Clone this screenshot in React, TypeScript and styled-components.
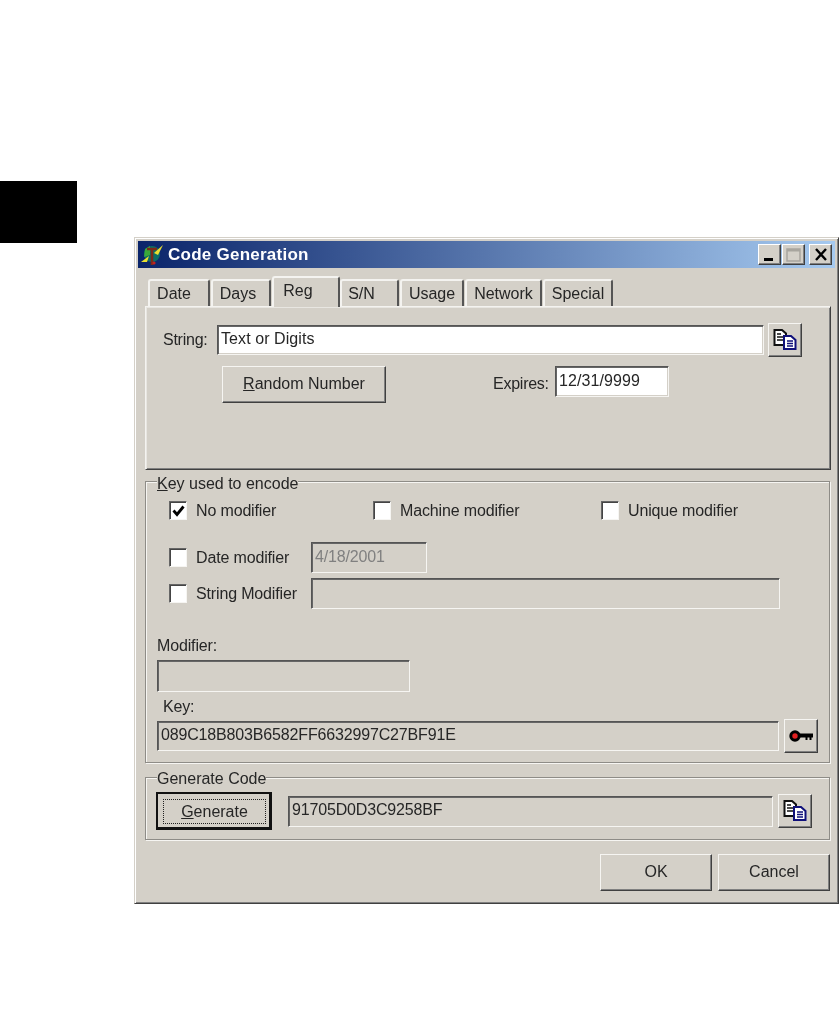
import React from 'react';
import styled, { createGlobalStyle } from 'styled-components';

const GlobalStyle = createGlobalStyle`
  html, body {
    margin: 0;
    padding: 0;
    background: #fff;
  }
  * {
    box-sizing: border-box;
  }
`;

const Page = styled.div`
  display: flex;
  align-items: flex-start;
  width: 840px;
  height: 1032px;
  overflow: hidden;
  font-family: "Liberation Sans", Arial, sans-serif;
  font-size: 16px;
  color: #262626;
`;

const ThumbTab = styled.div`
  flex: none;
  width: 77px;
  height: 62px;
  margin-top: 181px;
  background: #000;
`;

const Dialog = styled.div`
  flex: none;
  width: 705px;
  height: 667px;
  margin: 237px 0 0 57px;
  padding: 3px;
  background: #d4d0c8;
  border: 1px solid;
  border-color: #d4d0c8 #404040 #404040 #d4d0c8;
  box-shadow: inset 1px 1px 0 #fff, inset -1px -1px 0 #808080;
  filter: blur(0.4px);
`;

const TitleBar = styled.div`
  display: flex;
  align-items: center;
  height: 27px;
  padding: 0 3px 0 3px;
  background: linear-gradient(90deg, #0a246a 0%, #a6caf0 100%);
`;

const TitleText = styled.span`
  flex: 1;
  margin-left: 5px;
  font-size: 17px;
  font-weight: bold;
  letter-spacing: 0.25px;
  color: #fff;
`;

const WinButton = styled.div<{ $gap?: number }>`
  display: flex;
  align-items: center;
  justify-content: center;
  width: 23px;
  height: 21px;
  margin-left: ${(p) => p.$gap ?? 0}px;
  background: #d4d0c8;
  border: 1px solid;
  border-color: #fff #404040 #404040 #fff;
  box-shadow: inset -1px -1px 0 #808080;
`;

const Body = styled.div`
  padding: 8px 4px 0 7px;
`;

const TabRow = styled.div`
  display: flex;
  align-items: flex-end;
  height: 30px;
  padding-left: 3px;
`;

const Tab = styled.div<{ $width: number; $active?: boolean; $gap?: number; $shift?: number }>`
  display: flex;
  align-items: center;
  justify-content: center;
  position: relative;
  z-index: ${(p) => (p.$active ? 2 : 1)};
  width: ${(p) => p.$width}px;
  height: ${(p) => (p.$active ? 31 : 27)}px;
  margin-left: ${(p) => p.$gap ?? 0}px;
  margin-bottom: ${(p) => (p.$active ? -1 : 0)}px;
  padding-bottom: ${(p) => (p.$active ? 4 : 0)}px;
  padding-right: ${(p) => p.$shift ?? 0}px;
  background: #d4d0c8;
  border-top: 2px solid #f4f3f0;
  border-left: 2px solid #f4f3f0;
  border-right: 2px solid #555;
  border-radius: 3px 3px 0 0;
`;

const Panel = styled.div`
  height: 164px;
  padding: 16px 0 0 17px;
  border: 1px solid;
  border-color: #f4f3f0 #404040 #404040 #f4f3f0;
  box-shadow: inset 1px 1px 0 #e8e6e1, inset -1px -1px 0 #808080;
`;

const Row = styled.div<{ $top?: number; $left?: number; $align?: string }>`
  display: flex;
  align-items: ${(p) => p.$align ?? 'center'};
  margin-top: ${(p) => p.$top ?? 0}px;
  margin-left: ${(p) => p.$left ?? 0}px;
`;

const Label = styled.span<{ $width?: number; $left?: number; $top?: number }>`
  flex: none;
  width: ${(p) => (p.$width ? `${p.$width}px` : 'auto')};
  margin-left: ${(p) => p.$left ?? 0}px;
  margin-top: ${(p) => p.$top ?? 0}px;
  letter-spacing: -0.25px;
  white-space: nowrap;
`;

const BlockLabel = styled.div<{ $top: number; $left?: number }>`
  height: 18px;
  line-height: 18px;
  margin-top: ${(p) => p.$top}px;
  margin-left: ${(p) => p.$left ?? 0}px;
  letter-spacing: -0.15px;
`;

const Field = styled.input<{ $width: number; $height?: number; $left?: number; $muted?: boolean }>`
  flex: none;
  display: block;
  width: ${(p) => p.$width}px;
  height: ${(p) => p.$height ?? 31}px;
  margin: 0 0 0 ${(p) => p.$left ?? 0}px;
  padding: 0 0 2px 3px;
  font: inherit;
  letter-spacing: ${(p) => (p.readOnly ? '-0.16px' : '0.08px')};
  color: ${(p) => (p.$muted ? '#808080' : '#262626')};
  background: ${(p) => (p.readOnly ? '#d4d0c8' : '#fff')};
  border: 1px solid;
  border-color: #555 #f6f5f2 #f6f5f2 #555;
  box-shadow: inset 1px 1px 0 #666, inset -1px -1px 0 #d4d0c8;
  outline: none;
  border-radius: 0;
`;

const Button = styled.div<{ $width: number; $height?: number; $left?: number }>`
  flex: none;
  display: flex;
  align-items: center;
  justify-content: center;
  width: ${(p) => p.$width}px;
  height: ${(p) => p.$height ?? 34}px;
  margin-left: ${(p) => p.$left ?? 0}px;
  padding-bottom: 1px;
  background: #d4d0c8;
  border: 1px solid;
  border-color: #f6f5f2 #404040 #404040 #f6f5f2;
  box-shadow: inset -1px -1px 0 #808080;
`;

const DefaultButton = styled.div`
  flex: none;
  width: 116px;
  height: 38px;
  margin-left: -1px;
  padding: 5px 3px 3px 5px;
  background: #d4d0c8;
  border: 2px solid #111;
  border-right-width: 3px;
  border-bottom-width: 3px;
`;

const FocusRect = styled.div`
  display: flex;
  align-items: center;
  justify-content: center;
  height: 100%;
  border: 1px dotted #222;
`;

const Group = styled.div<{ $top: number; $height: number }>`
  height: ${(p) => p.$height}px;
  margin: ${(p) => p.$top}px 1px 0 0;
  padding: 0 0 0 11px;
  border: 1px solid #8e8c87;
  box-shadow: 1px 1px 0 #f6f5f2, inset 1px 1px 0 #f6f5f2;
`;

const Legend = styled.div<{ $top: number }>`
  width: fit-content;
  height: 18px;
  line-height: 18px;
  margin-top: ${(p) => p.$top}px;
  background: #d4d0c8;
`;

const CheckItem = styled.div<{ $width?: number }>`
  flex: none;
  display: flex;
  align-items: center;
  gap: 9px;
  width: ${(p) => (p.$width ? `${p.$width}px` : 'auto')};
  letter-spacing: -0.15px;
`;

const CheckBox = styled.div`
  flex: none;
  display: flex;
  align-items: center;
  justify-content: center;
  width: 18px;
  height: 19px;
  background: #fff;
  border: 1px solid;
  border-color: #666 #f6f5f2 #f6f5f2 #666;
  box-shadow: inset 1px 1px 0 #444;
`;

const Footer = styled.div`
  display: flex;
  justify-content: flex-end;
  gap: 6px;
  margin: 14px 1px 0 0;
`;

const AppIcon = () => (
  <svg width="22" height="22" viewBox="0 0 22 22">
    <circle cx="11" cy="10" r="8" fill="#0b6e66" />
    <path d="M4 5 L9 2 L9 11 L3 13 Z" fill="#3aa83a" />
    <path d="M6 5 H16 M11 5 V21" stroke="#7a2a18" strokeWidth="2.6" fill="none" />
    <path d="M13 9 L22 1 L17 11 Z" fill="#e8e030" />
    <path d="M0 18 L8 12 L6 18 Z" fill="#e8e030" />
    <circle cx="13" cy="19" r="1.6" fill="#c02020" />
  </svg>
);

const MinGlyph = () => (
  <svg width="15" height="13" viewBox="0 0 15 13">
    <rect x="2" y="10" width="9" height="3" fill="#000" />
  </svg>
);

const MaxGlyph = () => (
  <svg width="15" height="14" viewBox="0 0 15 14">
    <rect x="1" y="1" width="13" height="12" fill="none" stroke="#a8a59e" strokeWidth="1.5" />
    <rect x="1" y="1" width="13" height="2.5" fill="#a8a59e" />
  </svg>
);

const CloseGlyph = () => (
  <svg width="14" height="13" viewBox="0 0 14 13">
    <path d="M2 1 L12 12 M12 1 L2 12" stroke="#000" strokeWidth="2.4" />
  </svg>
);

const CopyIcon = () => (
  <svg width="24" height="21" viewBox="0 0 24 21">
    <path d="M1.5 1 H9 L13 4.5 V16 H1.5 Z" fill="#fff" stroke="#111" strokeWidth="2" />
    <path d="M4 5 H8 M4 8 H10 M4 11 H10" stroke="#111" strokeWidth="1.4" />
    <path d="M11 7 H18 L22.5 11 V20 H11 Z" fill="#fff" stroke="#10107a" strokeWidth="2" />
    <path d="M14 12 H20 M14 14.5 H20 M14 17 H20" stroke="#10107a" strokeWidth="1.3" />
  </svg>
);

const KeyIcon = () => (
  <svg width="24" height="14" viewBox="0 0 24 14">
    <circle cx="6" cy="7" r="4.2" fill="#e02020" stroke="#000" strokeWidth="3" />
    <path d="M10 4.5 H24 V8.5 H22.5 V11 H20.5 V8.5 H18.5 V11 H16.5 V8.5 H10 Z" fill="#000" />
  </svg>
);

const CheckMark = () => (
  <svg width="13" height="12" viewBox="0 0 13 12">
    <path d="M1.5 5.5 L5 9.5 L11.5 1.5" fill="none" stroke="#000" strokeWidth="2.8" />
  </svg>
);

const tabs = [
  { name: 'Date', width: 62, gap: 0, shift: 10 },
  { name: 'Days', width: 60, gap: 1, shift: 6 },
  { name: 'Reg', width: 68, gap: 1, active: true, shift: 16 },
  { name: 'S/N', width: 59, gap: 0, shift: 16 },
  { name: 'Usage', width: 64, gap: 1 },
  { name: 'Network', width: 77, gap: 1 },
  { name: 'Special', width: 70, gap: 1 },
];

const App: React.FC = () => {
  return (
    <Page>
      <GlobalStyle />
      <ThumbTab />
      <Dialog>
        <TitleBar>
          <AppIcon />
          <TitleText>Code Generation</TitleText>
          <WinButton><MinGlyph /></WinButton>
          <WinButton $gap={1}><MaxGlyph /></WinButton>
          <WinButton $gap={4}><CloseGlyph /></WinButton>
        </TitleBar>
        <Body>
          <TabRow>
            {tabs.map((t) => (
              <Tab key={t.name} $width={t.width} $gap={t.gap} $active={t.active} $shift={t.shift}>{t.name}</Tab>
            ))}
          </TabRow>
          <Panel>
            <Row>
              <Label $width={54}>String:</Label>
              <Field $width={547} $height={30} defaultValue="Text or Digits" />
              <Button $width={34} $left={4}><CopyIcon /></Button>
            </Row>
            <Row $top={9} $align="flex-start">
              <Button $width={164} $height={37} $left={59}><span><u>R</u>andom Number</span></Button>
              <Label $width={62} $left={107} $top={9}>Expires:</Label>
              <Field $width={114} defaultValue="12/31/9999" />
            </Row>
          </Panel>

          <Group $top={11} $height={282}>
            <Legend $top={-7}><u>K</u>ey used to encode</Legend>
            <Row $top={8} $left={12}>
              <CheckItem $width={204}><CheckBox><CheckMark /></CheckBox>No modifier</CheckItem>
              <CheckItem $width={228}><CheckBox />Machine modifier</CheckItem>
              <CheckItem><CheckBox />Unique modifier</CheckItem>
            </Row>
            <Row $top={22} $left={12}>
              <CheckItem $width={142}><CheckBox />Date modifier</CheckItem>
              <Field $width={116} readOnly $muted defaultValue="4/18/2001" />
            </Row>
            <Row $top={5} $left={12}>
              <CheckItem $width={142}><CheckBox />String Modifier</CheckItem>
              <Field $width={469} readOnly />
            </Row>
            <BlockLabel $top={28}>Modifier:</BlockLabel>
            <Row $top={5}>
              <Field $width={253} $height={32} readOnly />
            </Row>
            <BlockLabel $top={6} $left={6}>Key:</BlockLabel>
            <Row $top={3}>
              <Field $width={622} $height={30} readOnly defaultValue="089C18B803B6582FF6632997C27BF91E" />
              <Button $width={34} $left={5}><KeyIcon /></Button>
            </Row>
          </Group>

          <Group $top={14} $height={63}>
            <Legend $top={-8}>Generate Code</Legend>
            <Row $top={4}>
              <DefaultButton>
                <FocusRect><span><u>G</u>enerate</span></FocusRect>
              </DefaultButton>
              <Field $width={485} $left={16} readOnly defaultValue="91705D0D3C9258BF" />
              <Button $width={34} $left={5}><CopyIcon /></Button>
            </Row>
          </Group>

          <Footer>
            <Button $width={112} $height={37}>OK</Button>
            <Button $width={112} $height={37}>Cancel</Button>
          </Footer>
        </Body>
      </Dialog>
    </Page>
  );
};

export default App;
